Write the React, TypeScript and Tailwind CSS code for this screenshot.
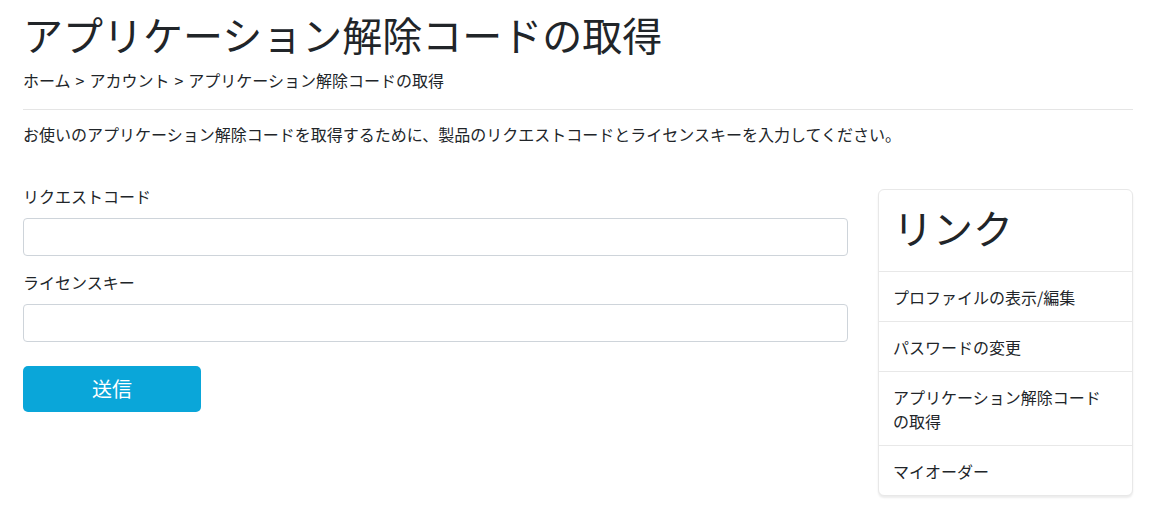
import React from 'react';

const links = [
  'プロファイルの表示/編集',
  'パスワードの変更',
  'アプリケーション解除コードの取得',
  'マイオーダー',
];

const App: React.FC = () => {
  return (
    <div
      className="min-h-screen bg-white text-[#212529]"
      style={{ fontFamily: '"Noto Sans CJK JP", "Noto Sans", sans-serif' }}
    >
      <div className="w-[1110px] ml-[23px]">
        {/* ヘッダー */}
        <h1 className="text-[40px] leading-[1.2] font-normal pt-[10px] m-0">
          アプリケーション解除コードの取得
        </h1>
        <nav className="text-[16px] leading-6 mt-[10px] flex gap-[5px]">
          <span>ホーム</span>
          <span>&gt;</span>
          <span>アカウント</span>
          <span>&gt;</span>
          <span>アプリケーション解除コードの取得</span>
        </nav>
        <hr className="border-0 border-t border-[#e5e5e5] mt-[17px] mb-[12px]" />
        <p className="text-[16px] leading-6 m-0">
          お使いのアプリケーション解除コードを取得するために、製品のリクエストコードとライセンスキーを入力してください。
        </p>

        <div className="flex gap-[30px] mt-[38px]">
          {/* フォーム */}
          <form className="w-[825px] flex flex-col" onSubmit={e => e.preventDefault()}>
            <label className="text-[16px] leading-6 mb-[10px]">リクエストコード</label>
            <input
              type="text"
              className="h-[38px] w-full border border-[#ced4da] rounded-[4px] px-3 outline-none"
            />
            <label className="text-[16px] leading-6 mt-[14px] mb-[10px]">ライセンスキー</label>
            <input
              type="text"
              className="h-[38px] w-full border border-[#ced4da] rounded-[4px] px-3 outline-none"
            />
            <button
              type="submit"
              className="mt-[24px] w-[178px] h-[46px] bg-[#0aa6d9] text-white text-[20px] rounded-[5px]"
            >
              送信
            </button>
          </form>

          {/* サイドバー */}
          <aside className="w-[255px] mt-[5px] self-start border border-[#e8e8e8] rounded-[6px] shadow-[0_2px_2px_rgba(0,0,0,0.08)] bg-white">
            <h2 className="text-[40px] leading-[1.2] font-normal pl-[14px] pt-[13px] pb-[20px] m-0">
              リンク
            </h2>
            <ul className="m-0 p-0 list-none">
              {links.map(link => (
                <li
                  key={link}
                  className="border-t border-[#e8e8e8] pl-[14px] pr-[24px] py-[12.5px] text-[16px] leading-6"
                >
                  {link}
                </li>
              ))}
            </ul>
          </aside>
        </div>
      </div>
    </div>
  );
};

export default App;
